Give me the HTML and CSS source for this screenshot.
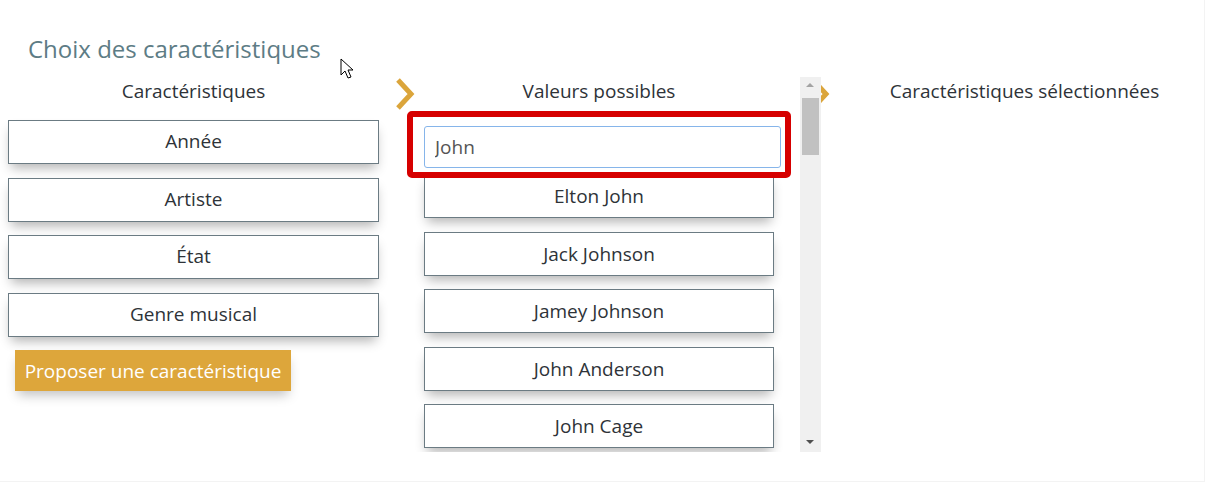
FILE: index.html
```html
<!DOCTYPE html>
<html lang="fr">
<head>
  <meta charset="UTF-8">
  <meta name="viewport" content="width=device-width, initial-scale=1.0">
  <title>Choix des caractéristiques</title>
  <link rel="stylesheet" href="styles.css">
</head>
<body>

<div class="page">
  <h2 class="title">Choix des caractéristiques</h2>

  <svg class="cursor" width="18" height="24" viewBox="0 0 18 24">
    <path d="M1 1 L1 17 L5 13 L8 20 L11 19 L8 12 L13 12 Z" fill="#fff" stroke="#000" stroke-width="1"/>
  </svg>

  <div class="columns">
    <div class="col-features">
      <div class="col-head">Caractéristiques</div>
      <div class="item">Année</div>
      <div class="item">Artiste</div>
      <div class="item">État</div>
      <div class="item">Genre musical</div>
      <button class="propose">Proposer une caractéristique</button>
    </div>

    <svg class="chevron" width="20" height="34" viewBox="0 0 20 34">
      <polyline points="3,3 16,17 3,31" fill="none" stroke="#dba53b" stroke-width="5"/>
    </svg>

    <div class="values-box">
      <div class="values">
        <div class="col-head">Valeurs possibles</div>
        <input type="text" class="search" value="John">
        <div class="item small">Elton John</div>
        <div class="item small">Jack Johnson</div>
        <div class="item small">Jamey Johnson</div>
        <div class="item small">John Anderson</div>
        <div class="item small">John Cage</div>
      </div>
      <div class="highlight"></div>
      <div class="scrollbar">
        <div class="arrow up"></div>
        <div class="thumb"></div>
        <div class="arrow down"></div>
      </div>
    </div>

    <svg class="chevron chevron-behind" width="20" height="34" viewBox="0 0 20 34">
      <polyline points="3,3 16,17 3,31" fill="none" stroke="#dba53b" stroke-width="5"/>
    </svg>

    <div class="col-selected">
      <div class="col-head">Caractéristiques sélectionnées</div>
    </div>
  </div>
</div>

</body>
</html>
```

FILE: styles.css
```css
html, body {
  margin: 0;
  background: #fff;
  overflow: hidden;
}
body {
  font-family: 'Open Sans', 'Lato', sans-serif;
  color: #2e3338;
}
.page {
  position: relative;
  height: 482px;
  border-right: 1px solid #f3f3f3;
  border-bottom: 1px solid #f3f3f3;
  padding-top: 35px;
  box-sizing: border-box;
}
.title {
  margin: 0 0 0 28px;
  font-size: 24px;
  line-height: 28px;
  font-weight: normal;
  color: #5d7c85;
}
.cursor {
  position: absolute;
  left: 340px;
  top: 58px;
}
.columns {
  display: flex;
  align-items: flex-start;
  margin-top: 14px;
}
.col-head {
  text-align: center;
  font-size: 19px;
  line-height: 28px;
  margin-bottom: 15px;
}
.col-features {
  width: 371px;
  margin-left: 8px;
}
.item {
  height: 44px;
  box-sizing: border-box;
  border: 1px solid #6b7b83;
  background: #fff;
  display: flex;
  align-items: center;
  justify-content: center;
  padding-bottom: 2px;
  font-size: 19px;
  margin-bottom: 13.5px;
  box-shadow: 0 7px 12px -3px rgba(0, 0, 0, 0.3);
}
.propose {
  margin: 0 0 0 7px;
  height: 41px;
  width: 276px;
  padding: 0;
  border: none;
  background: #dda63b;
  color: #fff;
  font-family: inherit;
  font-size: 19px;
  box-shadow: 0 7px 12px -3px rgba(0, 0, 0, 0.25);
}
.chevron {
  flex: none;
  margin-left: 16px;
}
.values-box {
  display: flex;
  height: 375px;
  position: relative;
  z-index: 1;
}
.values {
  width: 376px;
  padding-left: 9px;
  overflow: hidden;
}
.values .col-head {
  width: 350px;
  margin-bottom: 21px;
}
.values .item {
  padding-bottom: 0;
}
.search {
  display: block;
  width: 357px;
  height: 42px;
  box-sizing: border-box;
  border: 1px solid #86b5ea;
  border-radius: 3px;
  padding: 0 10px;
  margin: 0 0 6px;
  font-family: inherit;
  font-size: 19px;
  color: #555;
  outline: none;
}
.highlight {
  position: absolute;
  left: -8px;
  top: 34px;
  width: 372px;
  height: 55px;
  border: 6px solid #d60000;
  border-radius: 5px;
  z-index: 2;
}
.item.small {
  width: 350px;
}
.scrollbar {
  width: 21px;
  background: #f0f0f0;
  position: relative;
}
.thumb {
  position: absolute;
  left: 2px;
  right: 2px;
  top: 21px;
  height: 57px;
  background: #c1c1c1;
}
.arrow {
  position: absolute;
  left: 6px;
  width: 0;
  height: 0;
  border-left: 4px solid transparent;
  border-right: 4px solid transparent;
}
.arrow.up {
  top: 6px;
  border-bottom: 4px solid #a3a3a3;
}
.arrow.down {
  bottom: 8px;
  border-top: 4px solid #505050;
}
.chevron-behind {
  margin-left: -11px;
  position: relative;
  z-index: 0;
}
.col-selected {
  flex: 1;
  padding-left: 15px;
}
```
